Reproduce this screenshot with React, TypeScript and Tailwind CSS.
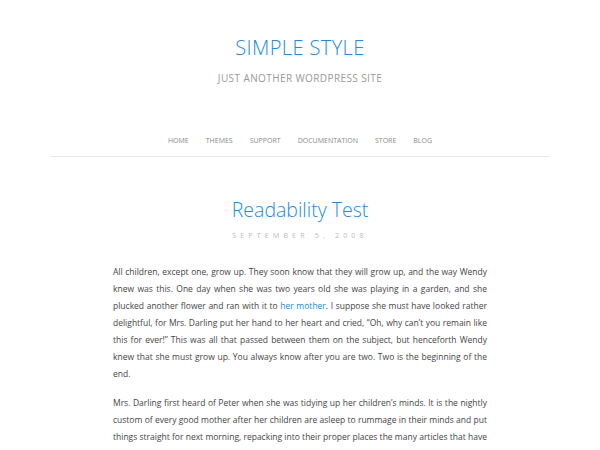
import React from 'react';

const App = () => {
  const navItems = ['Home', 'Themes', 'Support', 'Documentation', 'Store', 'Blog'];

  return (
    <div className="min-h-[450px] bg-white font-['Open_Sans',sans-serif] text-[#454545]">
      {/* Header */}
      <header className="pt-[36px] text-center">
        <h1 className="text-[20px] font-light uppercase leading-[24px] tracking-[0.4px] text-[#1a8be6]">
          Simple Style
        </h1>
        <p className="mt-[11px] text-[10px] uppercase leading-[14px] tracking-[0.4px] text-[#999]">
          Just another WordPress site
        </p>
      </header>

      {/* Navigation */}
      <nav className="mx-[50px] mt-[50px] border-b border-[#e6e6e6] pb-[9px]">
        <ul className="flex justify-center gap-[17px] text-[7px] uppercase leading-[12px] text-[#888]">
          {navItems.map((item) => (
            <li key={item}>{item}</li>
          ))}
        </ul>
      </nav>

      {/* Post */}
      <article className="mx-auto w-[374px] pt-[41px]">
        <h2 className="text-center text-[19.5px] font-light leading-[24px] text-[#1a8be6]">Readability Test</h2>
        <p className="mt-[9px] text-center text-[7px] uppercase leading-[10px] tracking-[4.2px] text-[#bbb]">
          September 5, 2008
        </p>

        <div className="mt-[22px] space-y-[12px] text-justify text-[8.5px] leading-[17px]">
          <p>
            All children, except one, grow up. They soon know that they will grow up, and the way Wendy knew was
            this. One day when she was two years old she was playing in a garden, and she plucked another flower and
            ran with it to <a className="text-[#1a8be6]">her mother</a>. I suppose she must have looked rather
            delightful, for Mrs. Darling put her hand to her heart and cried, “Oh, why can’t you remain like this for
            ever!” This was all that passed between them on the subject, but henceforth Wendy knew that she must grow
            up. You always know after you are two. Two is the beginning of the end.
          </p>
          <p>
            Mrs. Darling first heard of Peter when she was tidying up her children’s minds. It is the nightly custom
            of every good mother after her children are asleep to rummage in their minds and put things straight for
            next morning, repacking into their proper places the many articles that have wandered during the day.
          </p>
        </div>
      </article>
    </div>
  );
};

export default App;
